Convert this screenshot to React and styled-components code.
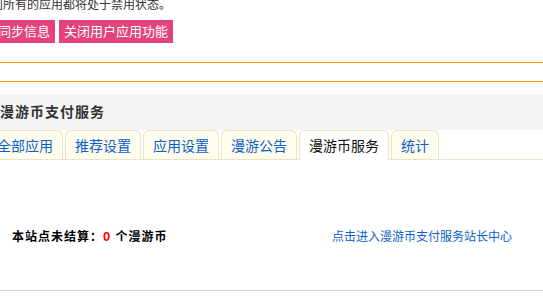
import * as React from 'react';
import styled, { createGlobalStyle } from 'styled-components';

const GlobalStyle = createGlobalStyle`
    html, body {
        margin: 0;
        padding: 0;
        overflow: hidden;
        background: #fff;
    }
    body {
        font-family: "Liberation Sans", "Noto Sans CJK SC", sans-serif;
        -webkit-font-smoothing: antialiased;
    }
`;

const Page = styled.div`
    margin-left: -14px;
`;

const Notice = styled.p`
    margin: -3px 0 0;
    padding-left: 5px;
    font-size: 12px;
    line-height: 16px;
    color: #333;
    white-space: nowrap;
`;

const ButtonRow = styled.div`
    display: flex;
    gap: 4px;
    margin-top: 7px;
    padding-left: 7px;
`;

const ActionButton = styled.button`
    height: 23px;
    padding: 0 5px;
    border: 0;
    background: #e3437c;
    color: #fff;
    font-family: inherit;
    font-size: 13px;
    line-height: 23px;
    cursor: pointer;
`;

const Divider = styled.div`
    margin-top: 19px;
    height: 18px;
    border-top: 1px solid #f90;
    border-bottom: 1px solid #f90;
`;

const PanelTitle = styled.h3`
    margin: 12px 0 0;
    height: 36px;
    padding-left: 14px;
    background: #f5f5f5;
    color: #333;
    font-size: 14px;
    font-weight: bold;
    letter-spacing: 1px;
    line-height: 36px;
`;

const TabBar = styled.ul`
    display: flex;
    align-items: flex-start;
    gap: 2px;
    height: 29px;
    margin: 0;
    padding: 0 0 0 1px;
    list-style: none;
    border-bottom: 1px solid #ebe3c6;
`;

const Tab = styled.li`
    box-sizing: border-box;
    height: ${p => (p.$active ? '30px' : '29px')};
    padding: 2px 9px 0;
    border: 1px solid #ebe3c6;
    border-bottom: 0;
    border-radius: 6px 6px 0 0;
    background: ${p => (p.$active ? '#fff' : '#fffdee')};
    color: ${p => (p.$active ? '#111' : '#0a5fcc')};
    font-size: 14px;
    line-height: 27px;
    white-space: nowrap;
    cursor: pointer;
`;

const Summary = styled.div`
    padding: 60px 0 40px;
    border-bottom: 1px solid #d4d4d4;
`;

const SummaryRow = styled.div`
    display: flex;
    align-items: center;
    justify-content: space-between;
    height: 30px;
    padding: 0 31px 0 26px;
    font-size: 12px;
`;

const Balance = styled.span`
    color: #000;
    font-weight: bold;
    letter-spacing: 1px;
`;

const Amount = styled.em`
    font-style: normal;
    color: #f00;
    font-size: 13px;
`;

const CenterLink = styled.a`
    color: #0a5fcc;
    text-decoration: none;
`;

const tabs = ['全部应用', '推荐设置', '应用设置', '漫游公告', '漫游币服务', '统计'];

const App = () => {
    return (
        <Page>
            <GlobalStyle />
            <Notice>则所有的应用都将处于禁用状态。</Notice>
            <ButtonRow>
                <ActionButton>同步信息</ActionButton>
                <ActionButton>关闭用户应用功能</ActionButton>
            </ButtonRow>
            <Divider />
            <PanelTitle>漫游币支付服务</PanelTitle>
            <TabBar>
                {tabs.map(t => (
                    <Tab key={t} $active={t === '漫游币服务'}>
                        {t}
                    </Tab>
                ))}
            </TabBar>
            <Summary>
                <SummaryRow>
                    <Balance>
                        本站点未结算：<Amount>0</Amount> 个漫游币
                    </Balance>
                    <CenterLink href="#">点击进入漫游币支付服务站长中心</CenterLink>
                </SummaryRow>
            </Summary>
        </Page>
    );
};

export default App;
